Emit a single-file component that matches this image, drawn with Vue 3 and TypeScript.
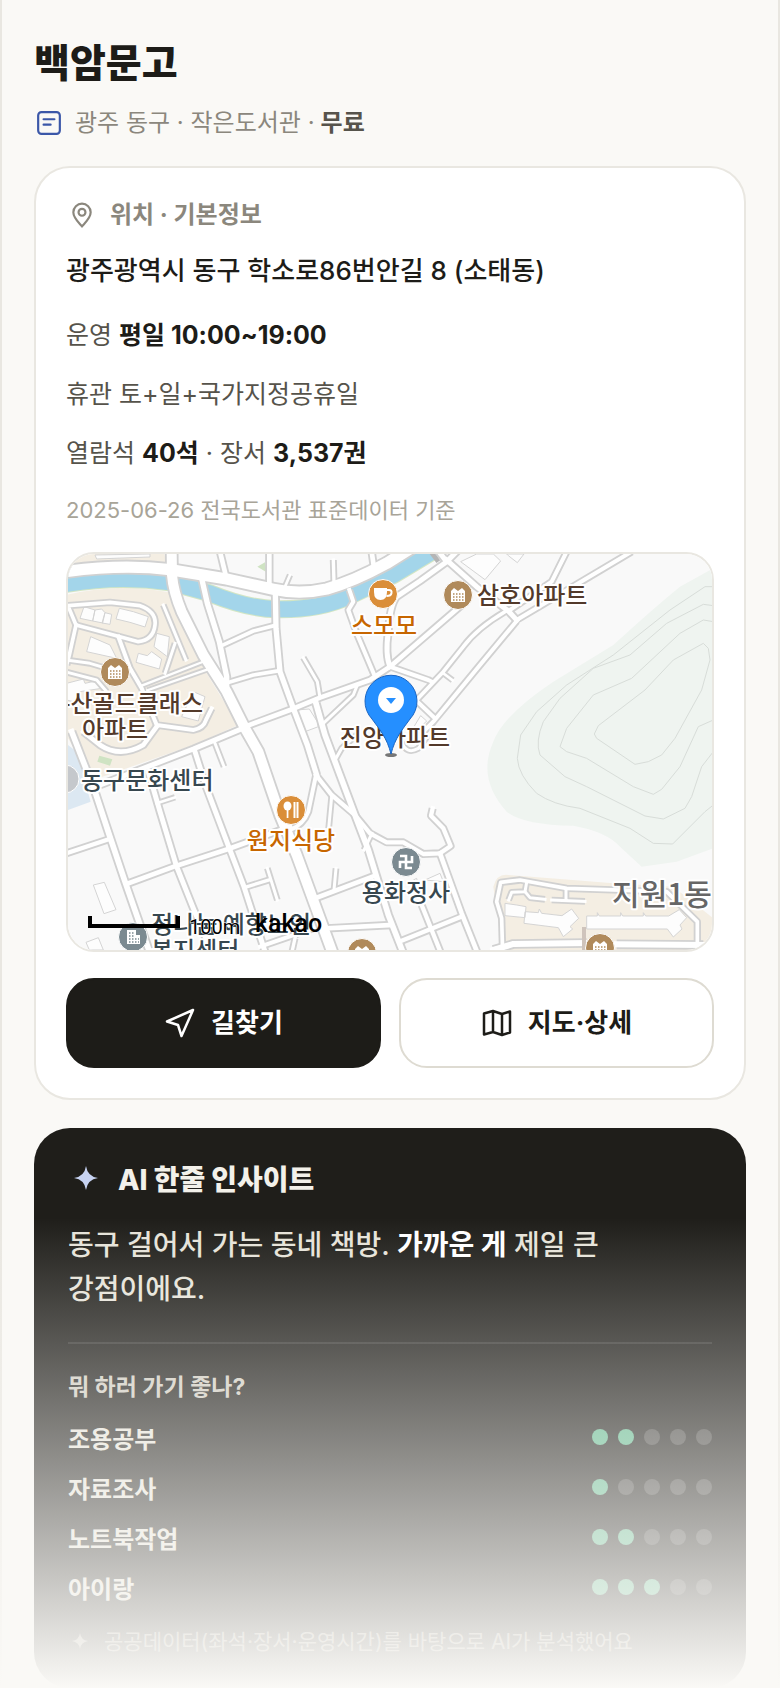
<script setup lang="ts">
interface Road { d: string; w: number }
interface Score { label: string; value: number }
interface MapLabel { text: string; x: number; y: number; kind: string; anchor: 'start' | 'middle' | 'end' }
interface Spot { x: number; y: number; kind: 'cafe' | 'food' | 'apt' | 'office' | 'temple' }

const scores: Score[] = [
  { label: '조용공부', value: 2 },
  { label: '자료조사', value: 1 },
  { label: '노트북작업', value: 2 },
  { label: '아이랑', value: 3 },
]

const roads: Road[] = [
  { d: 'M335 20L336 90Q340 140 365 200L430 330L500 440L555 550L595 620L660 810L710 930L765 1080L820 1230', w: 30 },
  { d: 'M425 100L442 175L478 290L500 395L500 435', w: 16 },
  { d: 'M646 140L648 250L660 380L700 490L742 600L770 690', w: 16 },
  { d: 'M628 0L628 115', w: 14 },
  { d: 'M480 20L497 90', w: 14 },
  { d: 'M820 45L822 115', w: 10 },
  { d: 'M690 90L675 125', w: 8 },
  { d: 'M935 20L942 68', w: 14 },
  { d: 'M485 302L580 258L646 241', w: 11 },
  { d: 'M500 414L580 390L658 377', w: 11 },
  { d: 'M555 545L690 495L780 458L930 405L990 365L1205 180', w: 14 },
  { d: 'M730 338L772 410L780 458', w: 9 },
  { d: 'M560 545L400 612L250 670L120 720', w: 15 },
  { d: 'M768 475L795 570L840 690L885 810L925 915L985 1110L1030 1225', w: 17 },
  { d: 'M890 425L880 450L790 535', w: 9 },
  { d: 'M828 640L845 610L890 570', w: 9 },
  { d: 'M868 135L880 170L865 195L890 265L945 395', w: 12 },
  { d: 'M1160 50L1080 108L1010 155Q990 180 985 260Q975 330 990 365', w: 15 },
  { d: 'M1125 5L1160 50L1200 10', w: 15 },
  { d: 'M1160 45L1250 125L1345 198L1370 225', w: 15 },
  { d: 'M1335 200Q1250 250 1210 305L1150 380L1070 465', w: 11 },
  { d: 'M1370 228L1260 360L1120 530L1085 565', w: 12 },
  { d: 'M1370 225L1530 130L1715 20', w: 12 },
  { d: 'M1520 20L1475 110L1350 195', w: 12 },
  { d: 'M990 365L1105 405L1115 410', w: 12 },
  { d: 'M1150 385L1178 406', w: 8 },
  { d: 'M1070 468L1125 520', w: 12 },
  { d: 'M1025 592Q1040 630 1075 610L1105 570', w: 9 },
  { d: 'M768 690L815 750L885 810L930 865L980 892L1030 892L1090 927L1140 925L1172 903L1150 850L1113 812L1118 790', w: 13 },
  { d: 'M768 690L745 800Q730 840 690 855', w: 12 },
  { d: 'M815 755L806 850', w: 9 },
  { d: 'M760 1062L945 992', w: 14 },
  { d: 'M828 970L822 1035', w: 9 },
  { d: 'M800 1150L995 1140', w: 14 },
  { d: 'M936 865L912 915', w: 9 },
  { d: 'M1140 925L1205 1105L1255 1230', w: 14 },
  { d: 'M1085 1080L1145 1230', w: 13 },
  { d: 'M1025 1187L1205 1115', w: 13 },
  { d: 'M35 560L105 740L148 870L195 1010L270 1225', w: 17 },
  { d: 'M265 680L300 800L350 965L400 1090L450 1210', w: 15 },
  { d: 'M405 620L440 730L508 910L552 1025L615 1220', w: 15 },
  { d: 'M10 928L140 885', w: 13 },
  { d: 'M200 1017L350 962L505 912L690 845', w: 14 },
  { d: 'M290 775L345 757', w: 8 },
  { d: 'M465 595L492 665', w: 9 },
  { d: 'M555 1027L630 1004', w: 10 },
  { d: 'M622 970L652 1065', w: 9 },
  { d: 'M600 1205L760 1150', w: 12 },
  { d: 'M695 1225L705 1180', w: 10 },
  { d: 'M20 182L150 172L240 182Q290 200 285 240Q280 285 235 290L180 275L48 240L25 185', w: 11 },
  { d: 'M48 240L28 330L20 360', w: 11 },
  { d: 'M175 275L210 370L245 430L290 540L400 555Q430 550 438 525L455 490', w: 12 },
  { d: 'M20 345L90 355L180 382', w: 9 },
  { d: 'M15 380L110 405L140 440', w: 9 },
  { d: 'M245 422L430 350', w: 7 },
  { d: 'M262 436L440 374', w: 7 },
  { d: 'M310 180L378 345', w: 9 },
  { d: 'M345 295L315 385', w: 9 },
  { d: 'M290 545L250 600Q180 640 120 600L70 560', w: 14 },
  { d: 'M0 82Q180 55 330 74L500 102L640 133Q720 150 800 132Q880 110 980 55L1060 5', w: 34 },
  { d: 'M1328 1225L1325 1120L1310 1070L1322 1012L1380 1005L1520 1030L1820 1040L1912 1130L1912 1215', w: 11 },
  { d: 'M1400 1012L1395 1040L1355 1042L1346 1065', w: 9 },
  { d: 'M1395 1040L1410 1058L1455 1063', w: 9 },
  { d: 'M1518 1035L1518 1065M1475 1065L1575 1069', w: 9 },
  { d: 'M1300 1215L1360 1197L1580 1194M1670 1198L1930 1200', w: 18 },
]

const contours: string[] = [
  'M1960 125L1935 125L1830 195L1660 330L1520 420L1430 500L1382 570L1372 640Q1375 690 1430 745Q1480 780 1560 790L1710 850L1780 895L1838 897L1935 800L1960 780',
  'M1960 182L1930 178L1820 235L1710 330L1600 370L1500 460L1450 530Q1425 590 1440 630L1515 695L1580 725L1755 813L1810 822L1875 790L1895 755L1925 665L1960 620',
  'M1960 230L1930 225L1860 265L1715 400L1600 450L1520 550L1500 605L1520 620L1580 640L1720 725L1780 748L1805 733L1860 665L1915 545L1960 525',
  'M1930 295L1945 310L1950 345L1925 435L1845 580L1805 630L1765 650L1725 658L1610 580L1603 567L1615 542L1755 435L1840 345Z',
]

const buildings: string[] = [
  'M72 185L105 195L98 228L60 220ZM105 195L125 192L135 203L128 234L98 228ZM135 203L155 208L150 238L126 234Z',
  'M178 190L220 200L265 215L255 246L210 232L168 222Z',
  'M92 275L150 300L170 340L80 320Z',
  'M290 265L328 275L322 335L282 305ZM235 325L262 332L275 320L305 342L298 372L228 352Z',
  'M400 440L435 455L415 528L365 515Z',
  'M20 415L70 402L75 415L120 405L125 430L60 440L40 470L20 465Z',
  'M105 30L270 27L270 36L110 42Z',
  'M1250 27L1300 27L1322 48L1275 104L1202 50ZM1340 27L1392 27L1372 53L1345 32Z',
  'M100 1020L133 1012L168 1094L132 1106Z',
  'M78 1192L115 1178L130 1215L88 1215Z',
  'M710 495L748 492L772 530L775 545L735 560Z',
  'M1335 1075L1370 1080L1398 1085L1395 1118L1335 1112ZM1395 1100L1435 1103L1438 1092L1445 1105L1506 1112L1535 1092L1556 1120L1530 1145L1538 1152L1510 1175L1495 1148L1392 1135Z',
  'M1580 1113L1612 1113L1612 1103L1618 1113L1682 1113L1682 1103L1688 1113L1750 1113L1750 1103L1757 1113L1826 1113L1858 1094L1880 1118L1860 1140L1866 1152L1840 1176L1822 1152L1580 1152Z',
  'M1060 1005L1070 1000L1075 1025ZM1095 1005L1140 985L1150 1010ZM1062 545L1082 512L1100 528L1080 548Z',
]

const labels: MapLabel[] = [
  { text: '스모모', x: 316, y: 80, kind: 'food', anchor: 'middle' },
  { text: '삼호아파트', x: 409, y: 50, kind: 'apt', anchor: 'start' },
  { text: '-산골드클래스', x: 135, y: 158, kind: 'apt', anchor: 'end' },
  { text: '아파트', x: 47, y: 184, kind: 'apt', anchor: 'middle' },
  { text: '진양아파트', x: 327, y: 192, kind: 'apt', anchor: 'middle' },
  { text: '동구문화센터', x: 13, y: 235, kind: 'civic', anchor: 'start' },
  { text: '원지식당', x: 223, y: 295, kind: 'food', anchor: 'middle' },
  { text: '용화정사', x: 338, y: 347, kind: 'civic', anchor: 'middle' },
  { text: '지원1동', x: 594, y: 351, kind: 'town', anchor: 'middle' },
  { text: '정나눔 예향노인', x: 83, y: 379, kind: 'civic', anchor: 'start' },
  { text: '복지센터', x: 83, y: 405, kind: 'civic', anchor: 'start' },
]

const spots: Spot[] = [
  { x: 315, y: 40, kind: 'cafe' },
  { x: 390, y: 41, kind: 'apt' },
  { x: 47, y: 118, kind: 'apt' },
  { x: 223, y: 256, kind: 'food' },
  { x: 338, y: 308, kind: 'temple' },
  { x: 65, y: 383, kind: 'office' },
  { x: 294, y: 399, kind: 'apt' },
  { x: 532, y: 394, kind: 'apt' },
]
</script>

<template>
  <main class="page">
    <header class="head">
      <h1>백암문고</h1>
      <p class="meta">
        <svg class="meta-icon" viewBox="0 0 24 24" aria-hidden="true">
          <rect x="2" y="2" width="20" height="20" rx="3" />
          <path d="M7 8.500h10M7 13.500h6.500" />
        </svg>
        <span>광주 동구 · 작은도서관 ·</span>
        <strong>무료</strong>
      </p>
    </header>

    <section class="card">
      <h2>
        <svg viewBox="0 0 24 24" aria-hidden="true">
          <path d="M12 22.500C9 19 4 14.800 4 9.500a8 8 0 0 1 16 0C20 14.800 15 19 12 22.500Z" />
          <circle cx="12" cy="9.500" r="3.200" />
        </svg>
        위치 · 기본정보
      </h2>
      <p class="address">광주광역시 동구 학소로86번안길 8 (소태동)</p>
      <ul class="facts">
        <li>운영 <b>평일 10:00~19:00</b></li>
        <li>휴관 토+일+국가지정공휴일</li>
        <li>열람석 <b>40석</b> · 장서 <b>3,537권</b></li>
      </ul>
      <p class="source">2025-06-26 전국도서관 표준데이터 기준</p>

      <div class="map">
        <svg viewBox="0 0 644 396" preserveAspectRatio="xMidYMid slice" role="img" aria-label="백암문고 주변 지도">
          <rect width="644" height="396" fill="#f9f9f9" />
          <g transform="translate(-8 -9) scale(.33333)">
            <path d="M0 20H312L320 62Q180 45 0 75ZM0 155Q160 110 328 142L365 220L440 385L535 540L400 600L100 705L0 540Z" fill="#f4eee3" />
            <path d="M24 600L50 620L92 770L24 795Z" fill="#dce8f2" />
            <path d="M118 632L157 643L150 662L112 650ZM592 65L615 52L620 82Z" fill="#cfe3c3" />
            <path d="M0 1120Q20 1190 60 1225H0Z" fill="#e3b93a" />
            <path d="M1960 70L1860 125Q1780 190 1660 300L1480 410Q1330 510 1300 590Q1250 700 1340 800Q1390 840 1540 842Q1640 860 1680 905L1745 965L1850 950L1960 910Z" fill="#eff4f0" />
            <path v-for="c in contours" :key="c" :d="c" fill="none" stroke="#d7dcd8" stroke-width="3" />
            <path d="M1300 1025Q1310 985 1345 990L1500 1002L1660 1015L1840 1025L1960 1120V1225H1285L1325 1190Z" fill="#f4eee3" />
            <path d="M0 120Q170 88 330 112L450 145Q560 190 650 193Q780 195 870 152L1000 90L1125 15" fill="none" stroke="#d3e6c4" stroke-width="54" />
            <path d="M0 120Q170 88 330 112L450 145Q560 190 650 193Q780 195 870 152L1000 90L1125 15" fill="none" stroke="#a3d5ea" stroke-width="48" />
            <path v-for="b in buildings" :key="b" :d="b" fill="#fdfdfd" stroke="#d4d4d4" stroke-width="3" />
            <path d="M1105 10L1135 50" stroke="#b5b5b5" stroke-width="14" />
            <g fill="none" stroke-linejoin="round">
              <path v-for="r in roads" :key="'edge' + r.d" :d="r.d" stroke="#d1d1d1" :stroke-width="r.w + 11" />
              <path v-for="r in roads" :key="'road' + r.d" :d="r.d" stroke="#fff" :stroke-width="r.w" stroke-linecap="square" />
            </g>
            <path d="M1566 1146h12v70h-12z" fill="#cfc4bc" />
          </g>

          <circle cx="-3" cy="225" r="14" fill="#c5c8cc" stroke="#fff" />

          <g v-for="s in spots" :key="s.x + '-' + s.y" :transform="`translate(${s.x} ${s.y})`">
            <circle r="14.500" :class="['spot', s.kind]" />
            <g v-if="s.kind === 'cafe'">
              <path d="M-9-6H4V-2Q4 6-2.500 6Q-9 6-9-2Z" fill="#fff" />
              <path d="M4-4H6Q9-4 8.500-1Q8 2 3.500 2" fill="none" stroke="#fff" stroke-width="2" />
            </g>
            <g v-else-if="s.kind === 'food'" fill="#fff">
              <ellipse cx="-3.500" cy="-4" rx="4" ry="4.500" />
              <path d="M-4.300 0h1.700v8h-1.700zM2.500-8h2v16h-2zM5.500-8h2v16h-2z" />
            </g>
            <g v-else-if="s.kind === 'apt'">
              <path d="M-7 7V-4L-4-7L0-4L4-7L7-4V7Z" fill="#fff" />
              <path d="M-5-1H6M-5 2H6M-5 5H6" stroke="#b08a5b" stroke-width="1.500" stroke-dasharray="1.500 1.500" />
            </g>
            <g v-else-if="s.kind === 'office'">
              <path d="M-6 7V-7H3V-2H7V7Z" fill="#fff" />
              <path d="M-4-4H2M-4-1H2M-4 2H6M-4 5H6" stroke="#7b8a91" stroke-width="1.500" stroke-dasharray="1.500 1.500" />
            </g>
            <path v-else d="M-6-6H0V6H6M6-6V0H-6V6" fill="none" stroke="#fff" stroke-width="2.600" />
          </g>

          <text v-for="l in labels" :key="l.text" :x="l.x" :y="l.y" :text-anchor="l.anchor" :class="['label', l.kind]">{{ l.text }}</text>

          <ellipse cx="323" cy="201" rx="6" ry="2" fill="#777" />
          <path d="M323 200C319 184 312 176 304 165A26 26 0 1 1 342 165C334 176 327 184 323 200Z" fill="#258fff" stroke="#1b66c4" />
          <circle cx="323" cy="146" r="13" fill="#fff" />
          <path d="M318 144h10l-5 6z" fill="#258fff" />

          <path d="M22 362V372H110V362" fill="none" stroke="#000" stroke-width="4" />
          <text x="121" y="380" class="scale">100m</text>
          <text x="187" y="378" class="brand">kakao</text>
        </svg>
      </div>

      <div class="actions">
        <button type="button" class="primary">
          <svg viewBox="0 0 32 32" aria-hidden="true"><path d="M29 3L3 14.500L14 18L17.500 29Z" /></svg>
          길찾기
        </button>
        <button type="button">
          <svg viewBox="0 0 32 32" aria-hidden="true"><path d="M3 6.500L12 4L21 7L29 4.500V25.500L21 28L12 25L3 27.500ZM12 4V25M21 7V28" /></svg>
          지도·상세
        </button>
      </div>
    </section>

    <div class="insight-wrap">
      <section class="insight">
        <h2>
          <svg viewBox="0 0 24 24" aria-hidden="true"><path d="M12 0Q13.500 10.500 24 12Q13.500 13.500 12 24Q10.500 13.500 0 12Q10.500 10.500 12 0Z" /></svg>
          AI 한줄 인사이트
        </h2>
        <p class="summary">동구 걸어서 가는 동네 책방. <b>가까운 게</b> 제일 큰 강점이에요.</p>
        <h3>뭐 하러 가기 좋나?</h3>
        <ul class="scores">
          <li v-for="s in scores" :key="s.label">
            <span>{{ s.label }}</span>
            <span class="dots" role="img" :aria-label="`5점 중 ${s.value}점`">
              <i v-for="n in 5" :key="n" :class="{ on: n <= s.value }"></i>
            </span>
          </li>
        </ul>
        <p class="note">
          <svg viewBox="0 0 24 24" aria-hidden="true"><path d="M12 0Q13.500 10.500 24 12Q13.500 13.500 12 24Q10.500 13.500 0 12Q10.500 10.500 12 0Z" /></svg>
          공공데이터(좌석·장서·운영시간)를 바탕으로 AI가 분석했어요
        </p>
      </section>
    </div>
  </main>
</template>

<style>
body {
  margin: 0;
  background: #faf9f6;
}
</style>

<style scoped>
.page {
  box-sizing: border-box;
  padding: 36px 32px 0;
  border: solid #e9e7e1;
  border-width: 0 2px;
  background: #faf9f6;
  color: #1d1c18;
  font-family: Inter, "Noto Sans CJK KR", sans-serif;
  word-break: keep-all;
}
h1, h2, h3, p, ul {
  margin: 0;
  padding: 0;
}
ul {
  list-style: none;
}
svg {
  display: block;
  flex: none;
}
h1 {
  font-size: 39px;
  line-height: 54px;
  font-weight: 800;
}
.meta {
  display: flex;
  align-items: center;
  margin: 16px 0 26px;
  font-size: 24px;
  line-height: 34px;
  color: #8b877d;
}
.meta-icon {
  width: 26px;
  height: 26px;
  margin: 0 13px 0 2px;
  fill: none;
  stroke: #3b57a8;
  stroke-width: 2;
  stroke-linecap: round;
}
.meta strong {
  margin-left: 6px;
  font-weight: 600;
  color: #56534b;
}
.card {
  padding: 30px;
  border: 2px solid #e9e7e1;
  border-radius: 36px;
  background: #fff;
}
.card h2 {
  display: flex;
  align-items: center;
  font-size: 24px;
  line-height: 34px;
  font-weight: 700;
  color: #8b877d;
}
.card h2 svg {
  width: 26px;
  height: 26px;
  margin: 0 15px 0 3px;
  fill: none;
  stroke: currentColor;
  stroke-width: 2;
}
.address {
  margin-top: 9px;
  font-size: 26px;
  line-height: 60px;
  font-weight: 500;
}
.facts {
  margin-top: 5px;
  font-size: 25px;
  line-height: 59px;
  color: #56534b;
}
.facts b {
  font-weight: 700;
  color: #1d1c18;
}
.source {
  font-size: 22px;
  line-height: 54px;
  color: #a8a498;
}
.map {
  margin-top: 15px;
  border: 2px solid #e9e7e1;
  border-radius: 28px;
  overflow: hidden;
}
.map svg {
  width: 100%;
  height: 396px;
}
.spot { stroke: #fff; stroke-width: 1; fill: #b08a5b; }
.spot.cafe, .spot.food { fill: #da8e39; }
.spot.office, .spot.temple { fill: #7b8a91; }
.label {
  font-family: "Noto Sans CJK KR", sans-serif;
  font-size: 24px;
  font-weight: 500;
  fill: #533a2b;
  stroke: #fff;
  stroke-width: 4;
  stroke-linejoin: round;
  paint-order: stroke;
}
.label.food { fill: #c76600; }
.label.civic { fill: #37474f; }
.label.town { fill: #666; font-size: 30px; }
.scale {
  font-family: Roboto, sans-serif;
  font-size: 20px;
  fill: #000;
  stroke: #fff;
  stroke-width: 1;
  paint-order: stroke;
}
.brand {
  font-family: Roboto, sans-serif;
  font-size: 25px;
  font-weight: 500;
  fill: #000;
}
.actions {
  display: grid;
  grid-template-columns: 1fr 1fr;
  gap: 18px;
  margin-top: 26px;
}
button {
  display: flex;
  align-items: center;
  justify-content: center;
  gap: 15px;
  height: 90px;
  padding: 0;
  border: 2px solid #dedbd2;
  border-radius: 28px;
  background: #fff;
  color: #1d1c18;
  font: 700 26px/36px Inter, "Noto Sans CJK KR", sans-serif;
}
button svg {
  width: 32px;
  height: 32px;
  fill: none;
  stroke: currentColor;
  stroke-width: 2.5;
  stroke-linejoin: round;
}
button.primary {
  border-color: #1d1c18;
  background: #1d1c18;
  color: #fff;
}
.insight-wrap {
  position: relative;
  margin-top: 28px;
}
.insight-wrap::after {
  content: "";
  position: absolute;
  inset: 90px -34px 0;
  background: linear-gradient(rgba(250, 249, 246, 0), #faf9f6);
  pointer-events: none;
}
.insight {
  padding: 35px 34px 29px;
  border-radius: 36px;
  background: #1f1e1a;
  color: #f3f1ea;
}
.insight h2 {
  display: flex;
  align-items: center;
  font-size: 28px;
  line-height: 34px;
  font-weight: 800;
}
.insight h2 svg {
  width: 24px;
  height: 28px;
  margin: 0 20px 4px 6px;
  fill: #c7d3f2;
}
.summary {
  margin-top: 26px;
  padding-bottom: 31px;
  border-bottom: 2px solid rgba(255, 255, 255, .1);
  font-size: 28px;
  line-height: 44px;
  font-weight: 500;
  color: #e6e3d9;
}
.summary b {
  font-weight: 700;
  color: #fff;
}
h3 {
  margin-top: 26px;
  font-size: 23px;
  line-height: 34px;
  font-weight: 700;
  color: #cfcbc0;
}
.scores {
  margin-top: 8px;
  font-size: 24px;
  font-weight: 600;
  color: #e6e3d9;
}
.scores li {
  display: flex;
  align-items: center;
  justify-content: space-between;
  height: 50px;
}
.dots {
  display: flex;
  gap: 10px;
}
.dots i {
  width: 16px;
  height: 16px;
  border-radius: 50%;
  background: rgba(255, 255, 255, .18);
}
.dots .on {
  background: #5fb78c;
}
.note {
  display: flex;
  align-items: center;
  margin-top: 13px;
  font-size: 21px;
  line-height: 34px;
  color: #9a968b;
}
.note svg {
  width: 16px;
  height: 18px;
  margin: 0 16px 3px 4px;
  fill: currentColor;
}
</style>
